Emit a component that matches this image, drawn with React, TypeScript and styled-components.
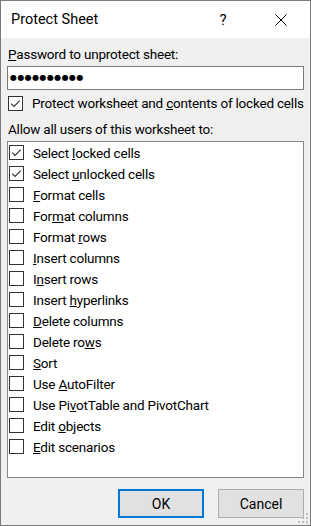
import styled, { createGlobalStyle } from "styled-components";

const GlobalStyle = createGlobalStyle`
	html, body {
		margin: 0;
		padding: 0;
		background: #ffffff;
	}
	body {
		font-family: Roboto, "Noto Sans", sans-serif;
		color: #000000;
	}
`;

type Item = {
	before: string;
	key: string;
	after: string;
	checked?: boolean;
};

const permissions: Item[] = [
	{ before: "Select ", key: "l", after: "ocked cells", checked: true },
	{ before: "Select ", key: "u", after: "nlocked cells", checked: true },
	{ before: "", key: "F", after: "ormat cells" },
	{ before: "For", key: "m", after: "at columns" },
	{ before: "Format ", key: "r", after: "ows" },
	{ before: "", key: "I", after: "nsert columns" },
	{ before: "I", key: "n", after: "sert rows" },
	{ before: "Insert ", key: "h", after: "yperlinks" },
	{ before: "", key: "D", after: "elete columns" },
	{ before: "Delete ro", key: "w", after: "s" },
	{ before: "", key: "S", after: "ort" },
	{ before: "Use ", key: "A", after: "utoFilter" },
	{ before: "Use Pi", key: "v", after: "otTable and PivotChart" },
	{ before: "Edit ", key: "o", after: "bjects" },
	{ before: "", key: "E", after: "dit scenarios" },
];

function CheckBox({ checked }: { checked?: boolean }) {
	return (
		<Box>
			{checked && (
				<svg width="13" height="13" viewBox="0 0 13 13">
					<path d="M2.2 6.6 L5 9.4 L10.8 3.6" fill="none" stroke="#333" strokeWidth="1.2" />
				</svg>
			)}
		</Box>
	);
}

function App() {
	return (
		<>
			<GlobalStyle />
			<Window>
				<TitleBar>
					<Title>Protect Sheet</Title>
					<CaptionButton>?</CaptionButton>
					<CaptionButton>
						<svg width="12" height="12" viewBox="0 0 12 12">
							<path d="M0.5 0.5 L11.5 11.5 M11.5 0.5 L0.5 11.5" stroke="#000" strokeWidth="1" />
						</svg>
					</CaptionButton>
				</TitleBar>
				<Body>
					<Label>
						<u>P</u>assword to unprotect sheet:
					</Label>
					<PasswordBox>
						<Dots>●●●●●●●●●●</Dots>
					</PasswordBox>
					<CheckRow>
						<CheckBox checked />
						<span>
							Protect worksheet and <u>c</u>ontents of locked cells
						</span>
					</CheckRow>
					<Label className="allow">Allow all users of this worksheet to:</Label>
					<List>
						{permissions.map((p) => (
							<ListRow key={p.before + p.key + p.after}>
								<CheckBox checked={p.checked} />
								<span>
									{p.before}
									<u>{p.key}</u>
									{p.after}
								</span>
							</ListRow>
						))}
					</List>
					<Footer>
						<Button $primary>OK</Button>
						<Button>Cancel</Button>
					</Footer>
				</Body>
				<Grip width="12" height="12" viewBox="0 0 12 12">
					<rect x="9" y="1" width="2" height="2" fill="#bcbcbc" />
					<rect x="5" y="5" width="2" height="2" fill="#bcbcbc" />
					<rect x="9" y="5" width="2" height="2" fill="#bcbcbc" />
					<rect x="1" y="9" width="2" height="2" fill="#bcbcbc" />
					<rect x="5" y="9" width="2" height="2" fill="#bcbcbc" />
					<rect x="9" y="9" width="2" height="2" fill="#bcbcbc" />
				</Grip>
			</Window>
		</>
	);
}

const Window = styled.div`
	position: relative;
	box-sizing: border-box;
	width: 311px;
	height: 526px;
	border: 1px solid #7a7a7a;
	display: flex;
	flex-direction: column;
	background: #f0f0f0;
	font-size: 13.5px;
	letter-spacing: -0.2px;
`;

const TitleBar = styled.div`
	height: 37px;
	flex: none;
	background: #ffffff;
	display: flex;
	align-items: center;
	padding-left: 10px;
`;

const Title = styled.div`
	flex: 1;
	font-size: 14.5px;
	letter-spacing: 0;
`;

const CaptionButton = styled.div`
	width: 58px;
	height: 37px;
	display: flex;
	align-items: center;
	justify-content: center;
	font-size: 15px;
`;

const Body = styled.div`
	flex: 1;
	display: flex;
	flex-direction: column;
	padding: 6px 6px 0 6px;
`;

const Label = styled.div`
	height: 20px;
	line-height: 20px;
	padding-left: 1px;
	white-space: nowrap;
	&.allow {
		margin-top: 6px;
	}
`;

const PasswordBox = styled.div`
	box-sizing: border-box;
	margin-top: 2px;
	height: 24px;
	border: 1px solid #7a7a7a;
	background: #ffffff;
	display: flex;
	align-items: center;
	padding-left: 2px;
`;

const Dots = styled.span`
	font-family: "DejaVu Sans", sans-serif;
	font-size: 8px;
	letter-spacing: 0.4px;
	line-height: 1;
`;

const CheckRow = styled.div`
	margin-top: 3px;
	height: 20px;
	display: flex;
	align-items: center;
	gap: 9px;
	padding-left: 1px;
	white-space: nowrap;
`;

const Box = styled.span`
	box-sizing: border-box;
	width: 15px;
	height: 15px;
	flex: none;
	border: 1px solid #333333;
	background: #ffffff;
	display: flex;
	align-items: center;
	justify-content: center;
`;

const List = styled.div`
	box-sizing: border-box;
	margin-top: 2px;
	height: 337px;
	border: 1px solid #828790;
	background: #ffffff;
	display: flex;
	flex-direction: column;
	padding-left: 1px;
`;

const ListRow = styled.div`
	height: 21px;
	flex: none;
	display: flex;
	align-items: center;
	gap: 9px;
	white-space: nowrap;
`;

const Footer = styled.div`
	margin-top: 11px;
	display: flex;
	justify-content: flex-end;
	gap: 14px;
`;

const Button = styled.div<{ $primary?: boolean }>`
	box-sizing: border-box;
	width: 86px;
	height: 29px;
	background: #e1e1e1;
	border: ${(p) => (p.$primary ? "2px solid #0078d7" : "1px solid #adadad")};
	display: flex;
	align-items: center;
	justify-content: center;
	font-size: 14px;
	letter-spacing: 0;
`;

const Grip = styled.svg`
	position: absolute;
	right: 1px;
	bottom: 1px;
`;

export default App;
